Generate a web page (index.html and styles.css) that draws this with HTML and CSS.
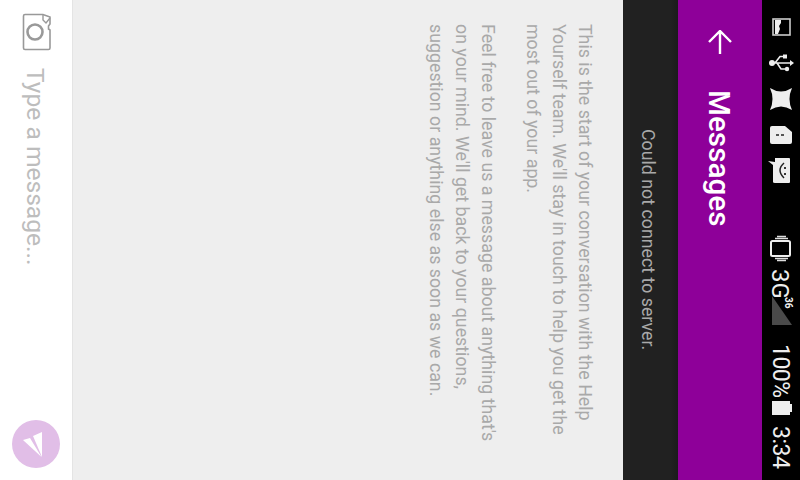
FILE: index.html
```html
<!DOCTYPE html>
<html lang="en">

<head>
    <meta charset="UTF-8">
    <title>Messages</title>
    <link rel="stylesheet" href="styles.css">
</head>

<body>
    <div class="screen">
        <!-- the whole screen is turned a quarter clockwise, so columns read left to right: composer .. status bar -->
        <div class="composer">
            <svg class="camera" width="30" height="38" viewBox="0 0 30 38">
                <path d="M3 1.5H21L28 4V11L26.5 13V16L28 17V35Q28 36.5 26.5 36.5H3Q1.5 36.5 1.5 35V3Q1.5 1.5 3 1.5Z" fill="none" stroke="#999" stroke-width="1.6" />
                <path d="M21 2V7L24 10L28 5" fill="none" stroke="#999" stroke-width="1.4" />
                <circle cx="13" cy="19" r="7.5" fill="none" stroke="#999" stroke-width="2.6" />
            </svg>
            <div class="placeholder">Type a message...</div>
            <div class="send">
                <svg width="48" height="48" viewBox="0 0 48 48">
                    <polygon points="11,20 18,18 29.5,37" fill="#fff" />
                    <polygon points="21,16 30,12 30,37" fill="#fff" />
                </svg>
            </div>
        </div>

        <div class="content">
            <p>This is the start of your conversation with the Help Yourself team. We'll stay in touch to help you get the most out of your app.</p>
            <p>Feel free to leave us a message about anything that's on your mind. We'll get back to your questions, suggestion or anything else as soon as we can.</p>
        </div>

        <div class="banner">Could not connect to server.</div>

        <div class="toolbar">
            <svg class="back" width="24" height="24" viewBox="0 0 24 24">
                <path d="M1 12L12 1L23 12M12 1V24" fill="none" stroke="#fff" stroke-width="2.4" />
            </svg>
            <div class="title">Messages</div>
        </div>

        <div class="status">
            <svg class="sb-icon" width="38" height="36" viewBox="0 0 38 36">
                <rect x="11" y="10" width="17" height="16" fill="none" stroke="#ccc" stroke-width="1.6" />
                <path d="M13 11H19V14L17 17L18 20L16 25H13Z" fill="#eee" />
            </svg>
            <svg class="sb-icon" width="38" height="36" viewBox="0 0 38 36">
                <circle cx="10" cy="18" r="3" fill="#eee" />
                <path d="M10 18H29M13 18L18 11.5H22M15 18L19 24H23" fill="none" stroke="#eee" stroke-width="1.6" />
                <rect x="21" y="9.5" width="4" height="4" fill="#eee" />
                <circle cx="25" cy="24" r="2.2" fill="#eee" />
                <path d="M28 15L32 18L28 21Z" fill="#eee" />
            </svg>
            <svg class="sb-icon" width="38" height="36" viewBox="0 0 38 36">
                <path d="M8 7Q19 14 30 7Q25 18 30 29Q19 22 8 29Q13 18 8 7Z" fill="#eee" />
            </svg>
            <svg class="sb-icon" width="38" height="36" viewBox="0 0 38 36">
                <path d="M10 9H23L30 15V25Q30 27 28 27H10Q8 27 8 25V11Q8 9 10 9Z" fill="#eee" />
                <path d="M14 18H17M19 18H22" stroke="#222" stroke-width="1.6" />
            </svg>
            <svg class="sb-icon" width="38" height="36" viewBox="0 0 38 36">
                <path d="M13 5H27Q28 5 28 6V29Q28 30 27 30H13Q11 30 11 29V12L6 8L13 9Z" fill="#eee" />
                <path d="M22 10Q14 17 22 25" fill="none" stroke="#222" stroke-width="1.5" />
                <path d="M23 14V16M23 20V22" stroke="#222" stroke-width="1.8" />
            </svg>

            <svg class="sb-icon vibrate" width="38" height="36" viewBox="0 0 38 36">
                <rect x="9" y="11" width="19" height="15" rx="1.5" fill="none" stroke="#eee" stroke-width="2" />
                <path d="M15 6.5H24M13 8.5H26M13 28.5H26M15 30.5H24" stroke="#ddd" stroke-width="1.4" />
            </svg>
            <div class="net">
                <span class="sb-text net-gen">3G</span>
                <svg class="signal" width="38" height="30" viewBox="0 0 38 30">
                    <polygon points="10,1 10,30 30,30" fill="#4a4a4a" />
                </svg>
                <span class="net-type">36</span>
            </div>
            <span class="sb-text level">100%</span>
            <svg class="battery" width="38" height="14" viewBox="0 0 38 14">
                <path d="M10 0H28V3H30V11H28V14H10Z" fill="#eee" />
            </svg>
            <span class="sb-text clock">3:34</span>
        </div>
    </div>
</body>

</html>
```

FILE: styles.css
```css
body {
    margin: 0;
    background: #eee;
    overflow: hidden;
    font-family: Roboto, "Liberation Sans", sans-serif;
}

.screen {
    display: flex;
    width: 800px;
    height: 480px;
}

/* composer */
.composer {
    box-sizing: border-box;
    width: 73px;
    height: 480px;
    padding-top: 13px;
    background: #fff;
    border-right: 1px solid #e4e4e4;
    display: flex;
    flex-direction: column;
    align-items: center;
}

.camera {
    margin-left: 1px;
}

.placeholder {
    writing-mode: vertical-rl;
    margin-top: 17px;
    margin-right: 2px;
    font-size: 24.6px;
    line-height: 28px;
    color: #bdbdbd;
}

.send {
    width: 48px;
    height: 48px;
    margin-top: auto;
    margin-bottom: 12px;
    border-radius: 50%;
    background: #e1bee7;
}

.send svg {
    display: block;
}

/* messages */
.content {
    flex: 1;
    writing-mode: vertical-rl;
    box-sizing: border-box;
    padding: 24px 25px 0 0;
    font-size: 17.8px;
    line-height: 26px;
    color: #a9a9a9;
}

.content p {
    margin: 0 0 0 19px;
    height: 430px;
}

/* banner */
.banner {
    box-sizing: border-box;
    width: 55px;
    height: 480px;
    padding-right: 5px;
    writing-mode: vertical-rl;
    text-align: center;
    line-height: 50px;
    font-size: 17.8px;
    color: #a9a9a9;
    background: linear-gradient(to left, #1b1b1b, #212121 8px);
}

/* toolbar */
.toolbar {
    width: 84px;
    height: 480px;
    background: #8e0099;
    display: flex;
    flex-direction: column;
    align-items: center;
}

.back {
    margin-top: 30px;
}

.title {
    writing-mode: vertical-rl;
    margin-top: 36px;
    margin-right: 2px;
    font-size: 29.7px;
    font-weight: 500;
    line-height: 32px;
    color: #fff;
}

/* status bar */
.status {
    width: 38px;
    height: 480px;
    box-sizing: border-box;
    padding-top: 9px;
    background: #000;
    display: flex;
    flex-direction: column;
    align-items: center;
}

.sb-icon,
.battery,
.signal {
    display: block;
    flex: none;
}

.vibrate {
    margin-top: 41px;
}

.sb-text {
    writing-mode: vertical-rl;
    margin-right: 3px;
    font-size: 23px;
    letter-spacing: -0.5px;
    line-height: 24px;
    color: #eee;
}

.net {
    position: relative;
    width: 38px;
    margin-top: 3px;
    display: flex;
    flex-direction: column;
    align-items: center;
}

.net-gen {
    font-size: 24px;
    letter-spacing: 0;
}

.signal {
    margin-top: -4px;
}

/* small label over the signal wedge */
.net-type {
    position: absolute;
    top: 28px;
    right: 7px;
    writing-mode: vertical-rl;
    font-size: 10px;
    font-weight: 700;
    line-height: 10px;
    color: #eee;
}

.level {
    margin-top: 19px;
}

.battery {
    margin-top: 4px;
}

.clock {
    margin-top: 11px;
}
```
